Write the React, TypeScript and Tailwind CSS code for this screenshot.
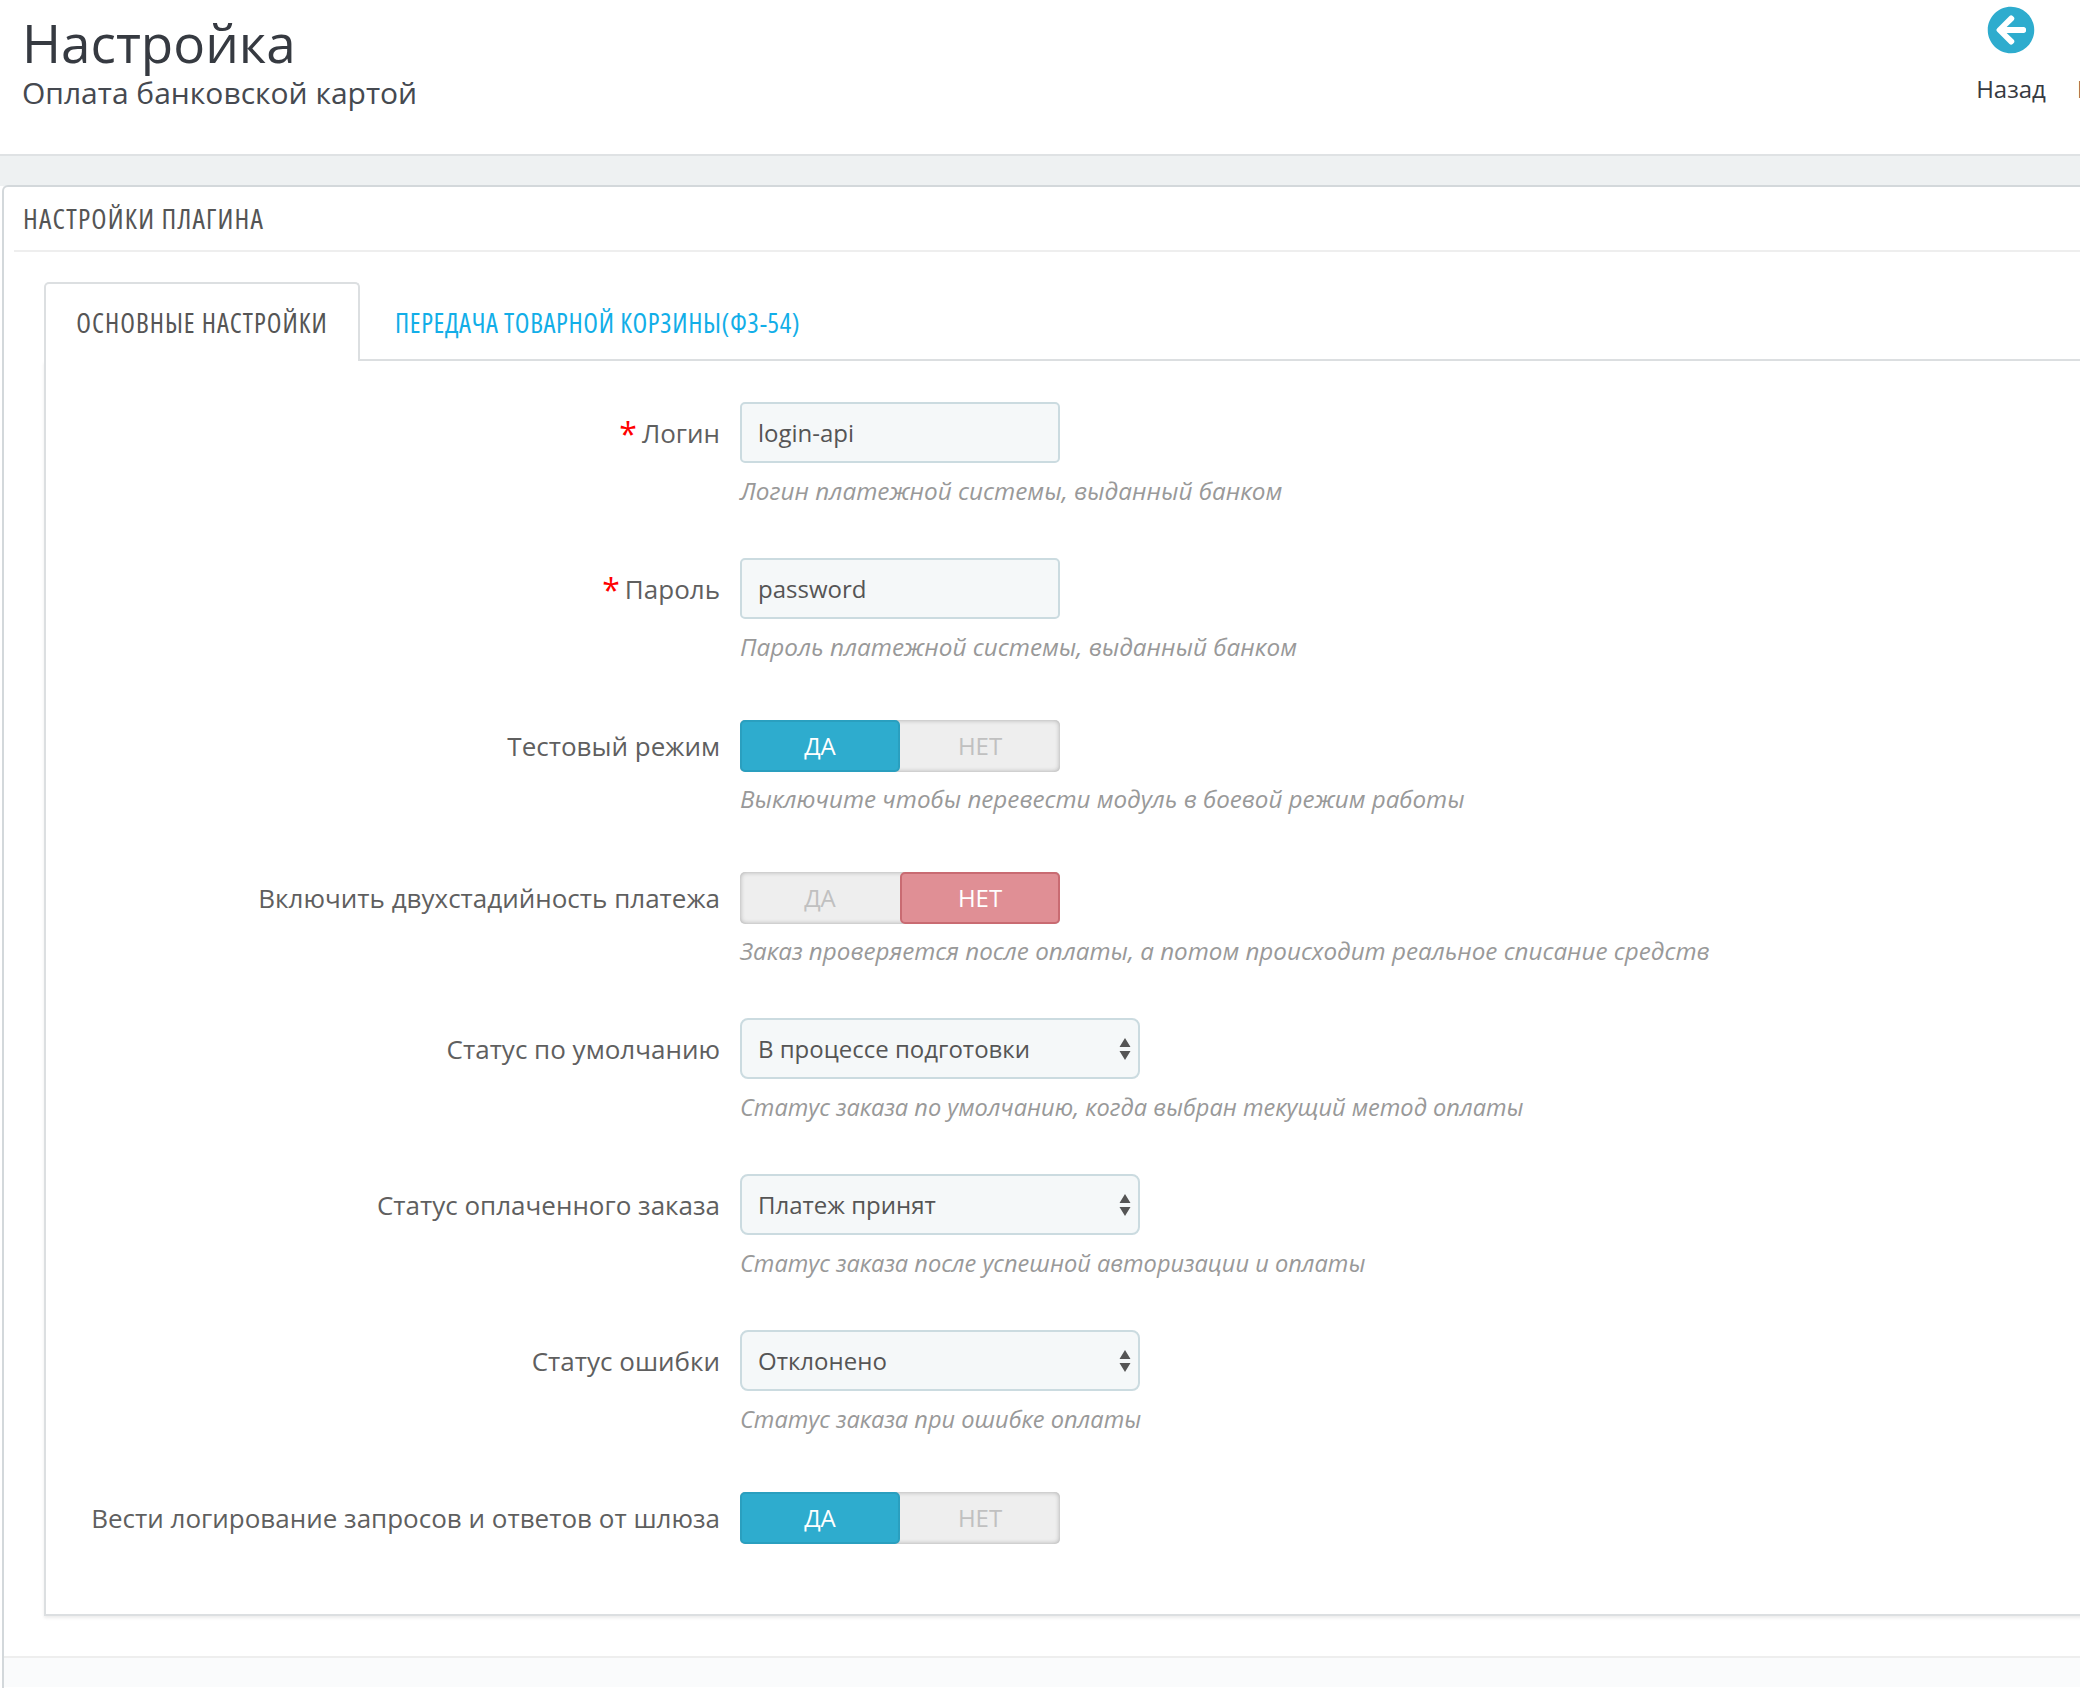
import React from "react";
import { FaArrowCircleLeft } from "react-icons/fa";

function Hint({ text, size, up }: { text: string; size: string; up?: boolean }) {
  return (
    <div className={`h-[36px] leading-[36px] italic text-[#999999] whitespace-nowrap ${up ? "mt-[9px]" : "mt-[10px]"} ${size}`}>
      {text}
    </div>
  );
}

function Label({ text, required, h, pad }: { text: string; required?: boolean; h: string; pad: string }) {
  return (
    <div className={`w-[674px] shrink-0 flex items-center justify-end text-[26px] text-[#5f5f5f] whitespace-nowrap ${h} ${pad}`}>
      {required && <span className="text-[#ff0000] text-[32px] leading-[32px] mr-[5px]">*</span>}
      {text}
    </div>
  );
}

function TextRow({ label, value, hint }: { label: string; value: string; hint: string }) {
  return (
    <div className="flex gap-[20px] mb-[49px]">
      <Label text={label} required h="h-[61px]" pad="pt-[2px]" />
      <div>
        <input
          readOnly
          value={value}
          className="block w-[320px] h-[61px] px-[16px] bg-[#f5f8f9] border-2 border-[#cbdbe0] rounded-[5px] text-[24px] text-[#555555] outline-none"
        />
        <Hint text={hint} size="text-[24.3px]" />
      </div>
    </div>
  );
}

function SwitchRow({ label, on, hint, last }: { label: string; on: boolean; hint?: string; last?: boolean }) {
  return (
    <div className={`flex gap-[20px] pt-[6px] ${last ? "" : "mb-[49px]"}`}>
      <Label text={label} h="h-[52px]" pad="pt-[1px]" />
      <div>
        <div className="flex w-[320px] h-[52px] rounded-[5px] bg-[#eeeeee] shadow-[inset_0_0_5px_rgba(0,0,0,0.3)] text-[24px]">
          {on ? (
            <>
              <div className="w-[160px] flex items-center justify-center rounded-[5px] bg-[#2eacce] border-2 border-[#2a9fbf] text-white">ДА</div>
              <div className="w-[160px] flex items-center justify-center text-[#c0c0c0]">НЕТ</div>
            </>
          ) : (
            <>
              <div className="w-[160px] flex items-center justify-center text-[#c0c0c0]">ДА</div>
              <div className="w-[160px] flex items-center justify-center rounded-[5px] bg-[#e08f95] border-2 border-[#c96b72] text-white">НЕТ</div>
            </>
          )}
        </div>
        {hint && <Hint text={hint} size="text-[24.2px]" up />}
      </div>
    </div>
  );
}

function SelectRow({ label, value, hint }: { label: string; value: string; hint: string }) {
  return (
    <div className="flex gap-[20px] mb-[49px]">
      <Label text={label} h="h-[61px]" pad="pt-[2px]" />
      <div>
        <div className="relative w-[400px] h-[61px]">
          <select
            value={value}
            onChange={() => {}}
            className="block w-full h-full pl-[16px] pr-[40px] appearance-none bg-[#f5f8f9] border-2 border-[#cbdbe0] rounded-[8px] text-[24px] text-[#555555] outline-none"
          >
            <option>{value}</option>
          </select>
          <svg className="absolute right-[9px] top-[20px] pointer-events-none" width="12" height="22" viewBox="0 0 12 22">
            <path d="M6 0 L11.5 9 H0.5 Z M0.5 13 H11.5 L6 22 Z" fill="#555555" />
          </svg>
        </div>
        <Hint text={hint} size="text-[23.6px]" />
      </div>
    </div>
  );
}

export default function App() {
  return (
    <div className="w-[2080px] h-[1688px] overflow-hidden bg-white text-[#555555] font-['Open_Sans',sans-serif]">
      <header className="h-[156px] border-b-2 border-[#dfe2e4] flex justify-between pl-[22px]">
        <div>
          <h1 className="mt-[13px] text-[53px] leading-[60px] font-normal text-[#363a41]">Настройка</h1>
          <div className="text-[30px] leading-[40px] text-[#454950]">Оплата банковской картой</div>
        </div>
        <div className="flex gap-[32px] -mr-[57px] text-[24px] text-[#363a41]">
          <div className="flex flex-col items-center w-[68px]">
            <FaArrowCircleLeft className="mt-[6px] w-[48px] h-[48px] text-[#2eacce]" />
            <span className="mt-[17px] leading-[36px]">Назад</span>
          </div>
          <div className="flex flex-col items-start w-[60px]">
            <div className="mt-[6px] h-[48px]" />
            <span className="mt-[17px] leading-[36px]">П</span>
          </div>
        </div>
      </header>

      <div className="h-[30px] bg-[#eef1f2]" />

      <main className="-mt-px ml-[2px] -mr-[20px] h-[1520px] bg-white border-l-2 border-t-2 border-[#d3d8db] rounded-tl-[6px]">
        <div className="ml-[10px] h-[65px] border-b-2 border-[#eeeeee] flex items-center pl-[9px] pb-[2px]">
          <h2 className="text-[28px] tracking-[1.2px] uppercase [font-stretch:75%] text-[#555555] whitespace-nowrap">Настройки плагина</h2>
        </div>

        <div className="ml-[40px] mt-[30px]">
          <div className="flex border-b-2 border-[#dcdfe1] h-[79px]">
            <div className="w-[316px] h-[79px] bg-white border-2 border-b-0 border-[#dcdfe1] rounded-t-[5px] flex items-center justify-center pt-[2px] text-[27px] tracking-[1px] uppercase [font-stretch:75%] whitespace-nowrap">
              Основные настройки
            </div>
            <div className="pl-[35px] pt-[5px] flex items-center text-[27px] tracking-[0.6px] uppercase [font-stretch:75%] text-[#12aee8] whitespace-nowrap">
              Передача товарной корзины(ФЗ-54)
            </div>
          </div>
          <div className="h-[1255px] pt-[41px] border-l-2 border-b-2 border-[#dcdfe1] shadow-[0_2px_3px_rgba(0,0,0,0.08)]">
            <TextRow label="Логин" value="login-api" hint="Логин платежной системы, выданный банком" />
            <TextRow label="Пароль" value="password" hint="Пароль платежной системы, выданный банком" />
            <SwitchRow label="Тестовый режим" on hint="Выключите чтобы перевести модуль в боевой режим работы" />
            <SwitchRow label="Включить двухстадийность платежа" on={false} hint="Заказ проверяется после оплаты, а потом происходит реальное списание средств" />
            <SelectRow label="Статус по умолчанию" value="В процессе подготовки" hint="Статус заказа по умолчанию, когда выбран текущий метод оплаты" />
            <SelectRow label="Статус оплаченного заказа" value="Платеж принят" hint="Статус заказа после успешной авторизации и оплаты" />
            <SelectRow label="Статус ошибки" value="Отклонено" hint="Статус заказа при ошибке оплаты" />
            <SwitchRow label="Вести логирование запросов и ответов от шлюза" on last />
          </div>
        </div>
        <div className="mt-[40px] h-[31px] border-t-2 border-[#eeeeee] bg-[#fafbfc]" />
      </main>
    </div>
  );
}
